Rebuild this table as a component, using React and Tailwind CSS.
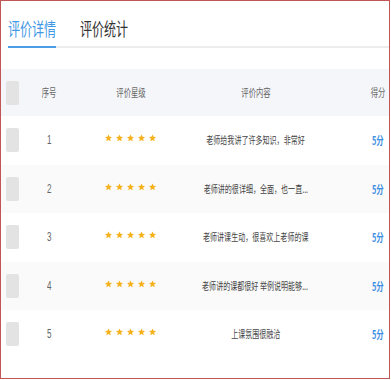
import React from 'react';

const rows = [
  { no: 1, text: '老师给我讲了许多知识，非常好', score: '5分' },
  { no: 2, text: '老师讲的很详细，全面，也一直...', score: '5分' },
  { no: 3, text: '老师讲课生动，很喜欢上老师的课', score: '5分' },
  { no: 4, text: '老师讲的课都很好 举例说明能够...', score: '5分' },
  { no: 5, text: '上课氛围很融洽', score: '5分' },
];

const FONT = "font-['Noto_Sans_CJK_SC','Noto_Sans',sans-serif]";
const GRID = 'grid grid-cols-[24px_48px_115px_135px_44px_1fr] items-center';

const Star = () => (
  <svg width="7" height="8" viewBox="0 0 10 10" className="block">
    <polygon points="5,0 6.5,3.3 10,3.6 7.3,6 8.2,9.8 5,7.8 1.8,9.8 2.7,6 0,3.6 3.5,3.3" fill="#f5b21e" />
  </svg>
);

const Check = () => <div className="ml-[5px] w-[13px] h-[24px] rounded-[2px] bg-[#e3e3e3]" />;

const Squish = ({ className = '', children }) => (
  <span className={`inline-block shrink-0 whitespace-nowrap scale-x-[0.67] ${className}`}>{children}</span>
);

const Cell = ({ className = '', children }) => (
  <div className={`flex justify-center ${className}`}>{children}</div>
);

const App = () => {
  return (
    <div className={`w-[390px] h-[379px] border border-[#c25656] bg-white overflow-hidden ${FONT}`}>
      {/* tabs */}
      <div className="ml-[7px] pt-[15px] flex gap-[24px] border-b-2 border-[#ececec]">
        <Cell className="w-[48px] -mb-[2px] pb-[6px] border-b-2 border-[#4c9de6]">
          <Squish className="text-[18px] leading-[24px] text-[#3f98e4]">评价详情</Squish>
        </Cell>
        <Cell className="w-[48px] pb-[6px]">
          <Squish className="text-[18px] leading-[24px] text-[#333]">评价统计</Squish>
        </Cell>
      </div>

      {/* table header */}
      <div className={`${GRID} mt-[21px] h-[47px] bg-[#f5f6fa] text-[11px] text-[#666]`}>
        <Check />
        <Cell><Squish>序号</Squish></Cell>
        <Cell><Squish>评价星级</Squish></Cell>
        <Cell><Squish>评价内容</Squish></Cell>
        <div />
        <Cell><Squish>得分</Squish></Cell>
      </div>

      {/* rows */}
      {rows.map((r, i) => (
        <div key={r.no} className={`${GRID} h-[48.5px] ${i % 2 === 1 ? 'bg-[#fafafa]' : 'bg-white'}`}>
          <Check />
          <Cell className="font-['Liberation_Sans',sans-serif] text-[12px] text-[#666]">
            <Squish>{r.no}</Squish>
          </Cell>
          <Cell className="gap-[4px] -mt-[4px]">
            <Star /><Star /><Star /><Star /><Star />
          </Cell>
          <Cell className="text-[10.5px] text-[#444]">
            <Squish className="scale-x-[0.7]">{r.text}</Squish>
          </Cell>
          <div />
          <Cell className="text-[11px] font-bold text-[#3d8fe2]">
            <Squish>{r.score}</Squish>
          </Cell>
        </div>
      ))}
    </div>
  );
};

export default App;
